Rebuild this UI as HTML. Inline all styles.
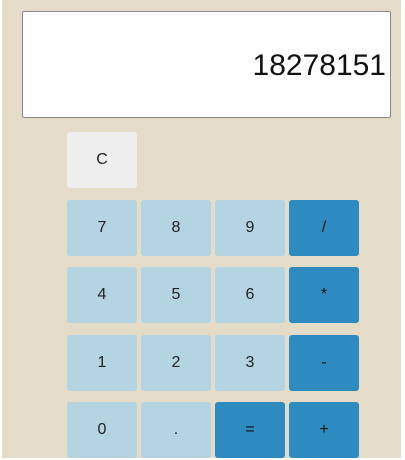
<!DOCTYPE html><html><head><style>
body{margin:0;width:405px;height:460px;background:#fff;position:relative;overflow:hidden;font-family:"Liberation Sans",sans-serif}
.bg{position:absolute;left:2px;top:0;width:399px;height:458px;background:#e4dcc8}
.d{position:absolute;left:22px;top:11px;width:363px;height:105px;background:#fff;border:1px solid #8a8a8a;border-radius:2px;font-size:30px;text-align:right;line-height:107px;padding-right:4px;box-sizing:content-box;color:#111}
.b{position:absolute;width:70px;height:56px;border-radius:3px;background:#b3d4e0;text-align:center;line-height:56px;font-size:16px;color:#222}
.o{background:#2e8bc0;color:#111}
.c{background:#eeeeee}
</style></head><body><div class="bg"></div>
<div class="d">18278151</div>
<div class="b c" style="left:67px;top:132px">C</div>
<div class="b" style="left:67px;top:200px">7</div><div class="b" style="left:141px;top:200px">8</div><div class="b" style="left:215px;top:200px">9</div><div class="b o" style="left:289px;top:200px">/</div>
<div class="b" style="left:67px;top:267px">4</div><div class="b" style="left:141px;top:267px">5</div><div class="b" style="left:215px;top:267px">6</div><div class="b o" style="left:289px;top:267px">*</div>
<div class="b" style="left:67px;top:335px">1</div><div class="b" style="left:141px;top:335px">2</div><div class="b" style="left:215px;top:335px">3</div><div class="b o" style="left:289px;top:335px">-</div>
<div class="b" style="left:67px;top:402px">0</div><div class="b" style="left:141px;top:402px">.</div><div class="b o" style="left:215px;top:402px">=</div><div class="b o" style="left:289px;top:402px">+</div>
</body></html>
